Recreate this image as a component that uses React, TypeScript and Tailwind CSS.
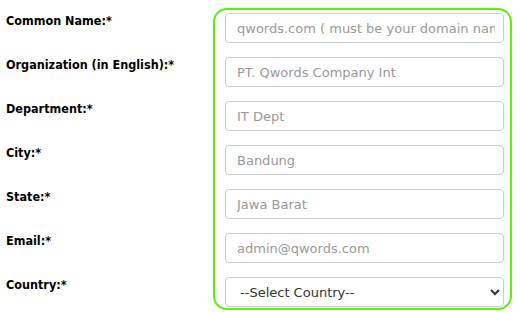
const fields = [
  { label: "Common Name:*", placeholder: "qwords.com ( must be your domain name )" },
  { label: "Organization (in English):*", placeholder: "PT. Qwords Company Int" },
  { label: "Department:*", placeholder: "IT Dept" },
  { label: "City:*", placeholder: "Bandung" },
  { label: "State:*", placeholder: "Jawa Barat" },
  { label: "Email:*", placeholder: "admin@qwords.com" },
];

export default function App() {
  return (
    <div className="flex h-[312px] w-[520px] overflow-hidden bg-white font-['DejaVu_Sans',sans-serif]">
      <div className="flex w-[213px] flex-col pl-[6px] pt-[13px]">
        {[...fields.map((f) => f.label), "Country:*"].map((label) => (
          <label
            key={label}
            className="block h-[44px] shrink-0 font-['DejaVu_Sans_Condensed','DejaVu_Sans',sans-serif] text-[12.5px] font-bold leading-[15px] text-black"
          >
            {label}
          </label>
        ))}
      </div>
      <div className="mt-[8px] flex h-[302px] w-[299px] flex-col gap-[14px] rounded-[14px] border-2 border-[#5cf00a] pb-[2px] pl-[10px] pr-[6px] pt-[3px]">
        {fields.map((f) => (
          <input
            key={f.label}
            type="text"
            placeholder={f.placeholder}
            className="h-[30px] w-[279px] shrink-0 rounded-[4px] border border-[#cccccc] pl-[11px] pr-[8px] text-[13px] text-[#333] outline-none placeholder:text-[#999]"
          />
        ))}
        <select className="h-[30px] w-[279px] shrink-0 rounded-[4px] border border-[#cccccc] bg-white pl-[10px] pr-[8px] text-[13px] text-[#333] outline-none">
          <option>--Select Country--</option>
        </select>
      </div>
    </div>
  );
}
